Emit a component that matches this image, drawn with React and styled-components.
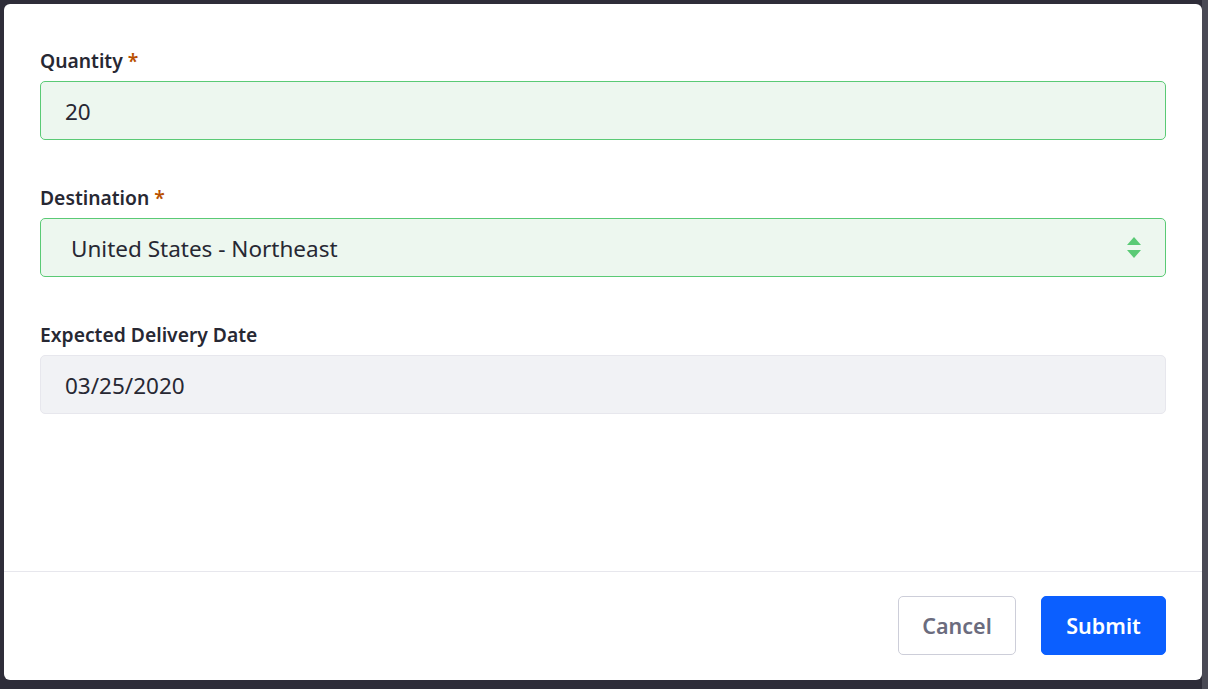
import React from "react";
import styled, { createGlobalStyle } from "styled-components";

const GlobalStyle = createGlobalStyle`
  html, body {
    margin: 0;
    padding: 0;
    background: #33323e;
    font-family: "Noto Sans", "Open Sans", sans-serif;
  }
  * { box-sizing: border-box; }
`;

const Backdrop = styled.div`
  width: 1208px;
  height: 689px;
  padding: 4px 6px 9px 4px;
  background: linear-gradient(to right, #2e2d39 0, #2e2d39 1202px, #4a4a55 1202px);
`;

const Modal = styled.div`
  height: 676px;
  background: #fff;
  border-radius: 6px;
  display: flex;
  flex-direction: column;
  overflow: hidden;
`;

const Body = styled.div`
  flex: 1;
  padding: 45px 36px 0 36px;
`;

const Group = styled.div`
  margin-bottom: 46px;
`;

const Label = styled.label`
  display: block;
  font-size: 19.3px;
  font-weight: 600;
  color: #272833;
  line-height: 24px;
  margin-bottom: 8px;
`;

const Req = styled.span`
  color: #b95000;
  margin-left: 5px;
`;

const Field = styled.div`
  position: relative;
  height: 59px;
  display: flex;
  align-items: center;
  padding-left: ${p => (p.select ? 30 : 24)}px;
  padding-top: 2px;
  font-size: 22.5px;
  color: #272833;
  border-radius: 5px;
  border: 1px solid ${p => (p.valid ? "#5aca75" : "#e7e7ed")};
  background: ${p => (p.valid ? "#edf7ef" : "#f1f2f5")};
`;

const Arrows = styled.svg`
  position: absolute;
  right: 24px;
  top: 50%;
  transform: translateY(-50%);
`;

const Footer = styled.div`
  border-top: 1px solid #e7e7ed;
  padding: 24px 36px 25px;
  display: flex;
  justify-content: flex-end;
  gap: 25px;
`;

const Button = styled.button`
  height: 59px;
  width: ${p => (p.primary ? 125 : 118)}px;
  padding: 0;
  font-family: inherit;
  font-size: 21.5px;
  font-weight: 600;
  border-radius: 5px;
  cursor: pointer;
  border: 1px solid ${p => (p.primary ? "#0b5fff" : "#cdced9")};
  background: ${p => (p.primary ? "#0b5fff" : "#fff")};
  color: ${p => (p.primary ? "#fff" : "#6b6c7e")};
`;

export default function App() {
  return (
    <>
      <GlobalStyle />
      <Backdrop>
        <Modal>
          <Body>
            <Group>
              <Label>Quantity<Req>*</Req></Label>
              <Field valid>20</Field>
            </Group>
            <Group>
              <Label>Destination<Req>*</Req></Label>
              <Field valid select>
                United States - Northeast
                <Arrows width="14" height="22" viewBox="0 0 14 22">
                  <path d="M7 0 L14 8 L0 8 Z M0 13 L14 13 L7 21 Z" fill="#5aca75" />
                </Arrows>
              </Field>
            </Group>
            <Group>
              <Label>Expected Delivery Date</Label>
              <Field>03/25/2020</Field>
            </Group>
          </Body>
          <Footer>
            <Button>Cancel</Button>
            <Button primary>Submit</Button>
          </Footer>
        </Modal>
      </Backdrop>
    </>
  );
}
